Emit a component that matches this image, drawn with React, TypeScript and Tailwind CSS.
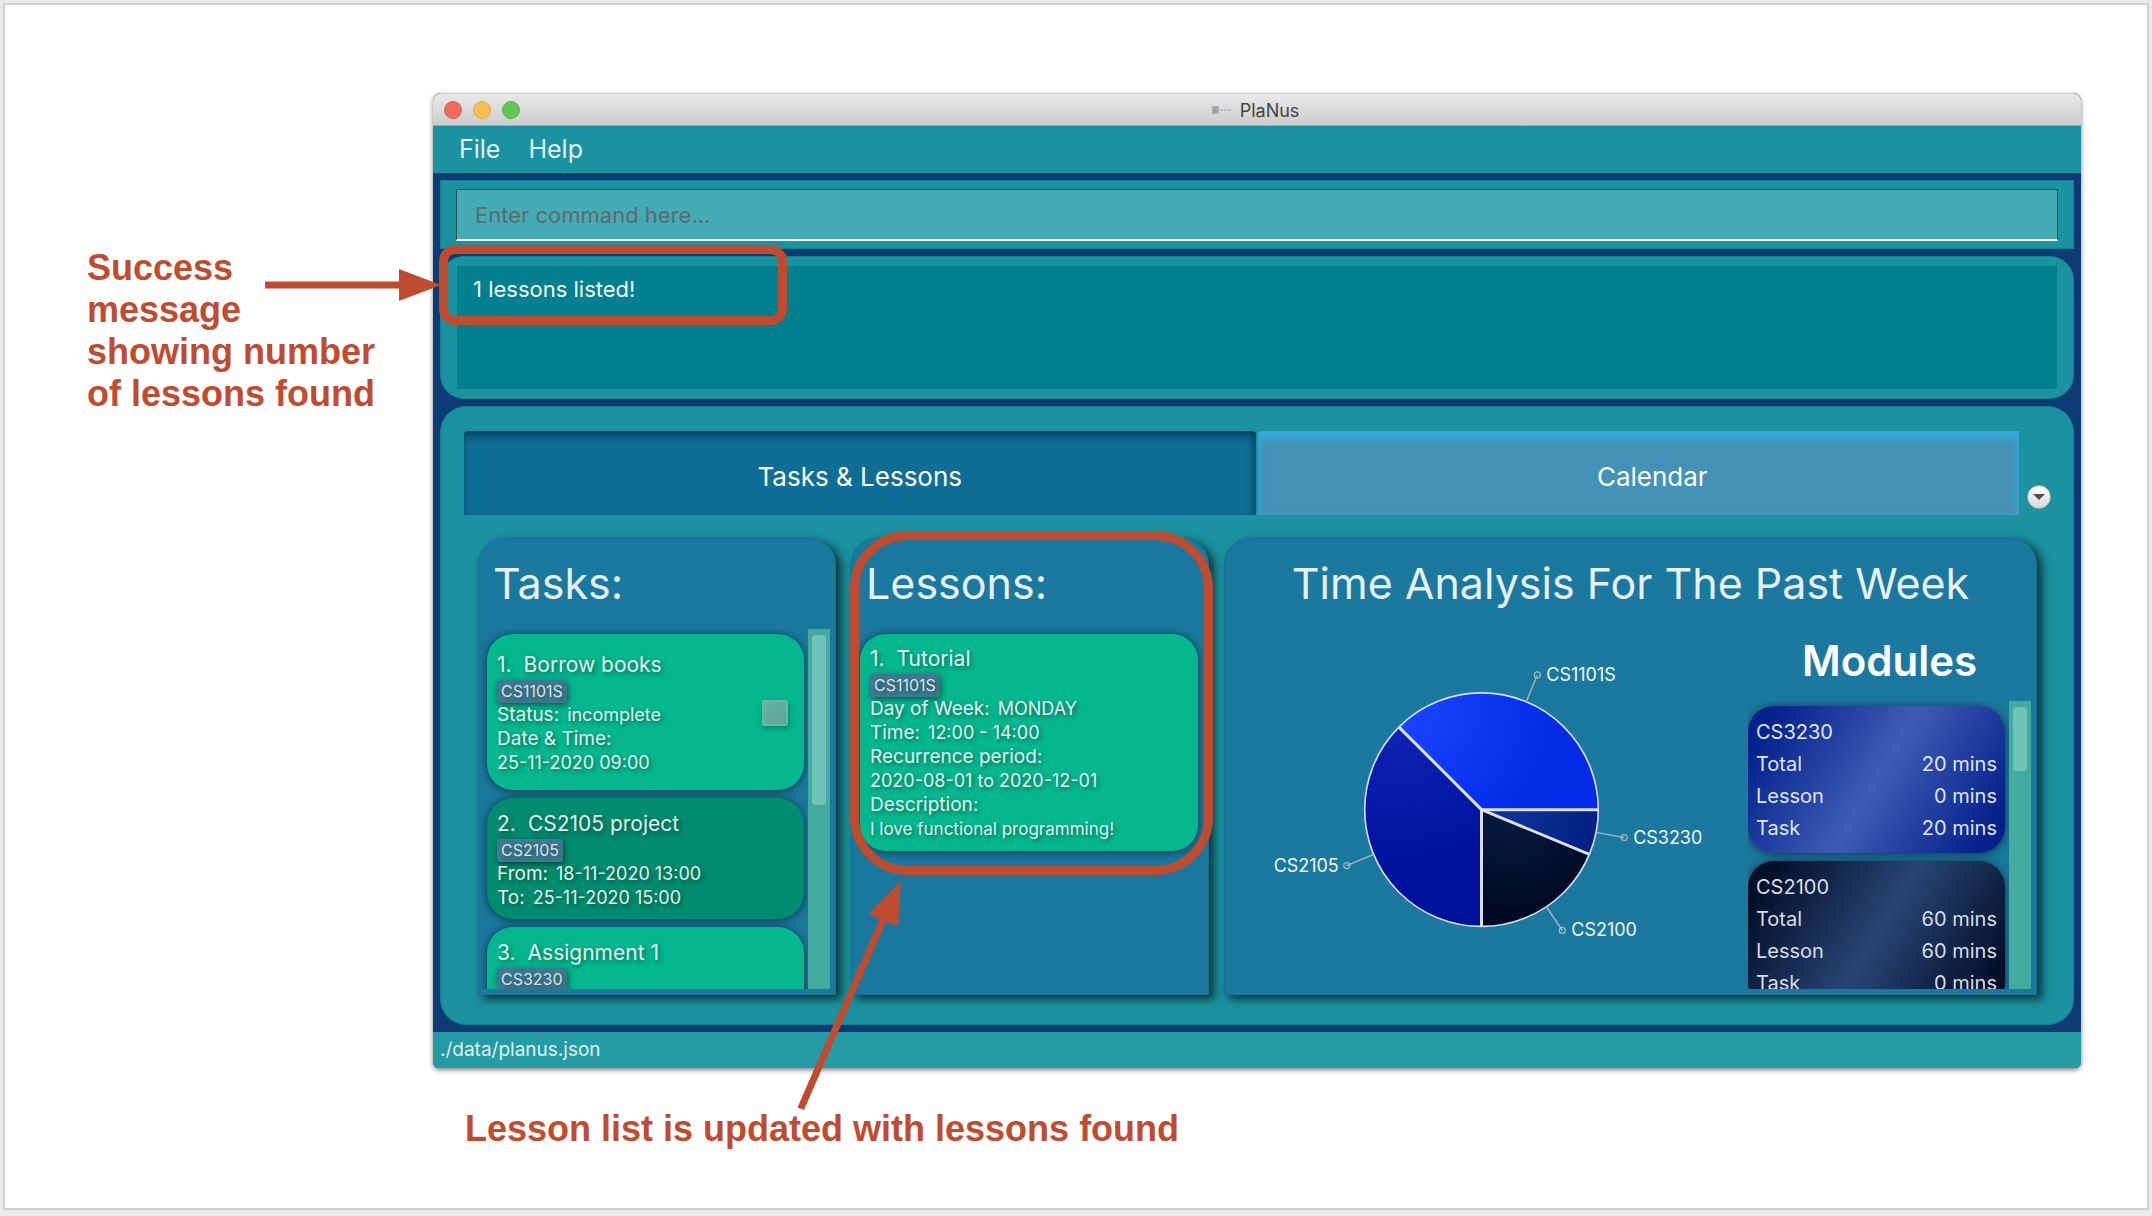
import React from "react";

const TEXT_SHADOW = "[text-shadow:2px_2px_5px_rgba(0,0,0,0.45)]";

function Scrollbar({ thumb }: { thumb: string }) {
  return (
    <div className="w-[22px] shrink-0 bg-[#43ab9d] px-1 py-1.5">
      <div className={`rounded bg-[#6fc4b9] ${thumb}`} />
    </div>
  );
}

function Tag({ children }: { children: React.ReactNode }) {
  return (
    <div className="flex h-6 items-center">
      <span className="rounded-[3px] bg-[#3e7b91] px-1 text-base leading-[23px] text-[#d5e3e8] shadow-[1px_2px_6px_rgba(0,0,0,0.5)]">
        {children}
      </span>
    </div>
  );
}

function Field({ label, value }: { label: string; value?: string }) {
  return (
    <p className="flex items-baseline gap-2 text-[19px] leading-6">
      <span>{label}</span>
      {value && <span className="text-lg leading-6">{value}</span>}
    </p>
  );
}

function Value({ children }: { children: React.ReactNode }) {
  return <p className="text-lg leading-6">{children}</p>;
}

function CardTitle({ index, children }: { index: number; children: React.ReactNode }) {
  return (
    <h3 className="flex gap-3 text-[21px] leading-7">
      <span>{index}.</span>
      <span>{children}</span>
    </h3>
  );
}

function Card({ className, children }: { className: string; children: React.ReactNode }) {
  return (
    <li
      className={`shrink-0 rounded-[26px] px-2.5 text-[#e0f3ed] shadow-[0_1px_9px_rgba(0,0,0,0.55)] ${TEXT_SHADOW} ${className}`}
    >
      {children}
    </li>
  );
}

function Panel({ title, className, children }: { title: string; className?: string; children: React.ReactNode }) {
  return (
    <section
      className={`relative rounded-t-[26px] border border-[#16709a] bg-[#1b789e] shadow-[5px_4px_10px_rgba(0,0,0,0.65)] ${className ?? ""}`}
    >
      <h2 className="px-3.5 pt-3 text-[43px] leading-[64px] text-[#e6f0f5]">{title}</h2>
      {children}
    </section>
  );
}

const slices = [
  { id: "a", from: 0, to: 135, c1: "#1c46ff", c2: "#002ae6" },
  { id: "b", from: 135, to: 270, c1: "#1526b8", c2: "#00129c" },
  { id: "c", from: 270, to: 337.5, c1: "#071c42", c2: "#000a22" },
  { id: "d", from: 337.5, to: 360, c1: "#0f3298", c2: "#001c80" },
];

const CX = 257;
const CY = 181;
const R = 117;

function point(angle: number, r: number) {
  const a = (angle * Math.PI) / 180;
  return [CX + r * Math.cos(a), CY - r * Math.sin(a)];
}

const callouts = [
  { text: "CS1101S", angle: 67.5, x: 313, y: 46, tx: 322, anchor: "start" as const },
  { text: "CS3230", angle: 348.75, x: 400, y: 209, tx: 409, anchor: "start" as const },
  { text: "CS2100", angle: 303.75, x: 338, y: 302, tx: 347, anchor: "start" as const },
  { text: "CS2105", angle: 202.5, x: 122, y: 237, tx: 114, anchor: "end" as const },
];

function PieChart() {
  return (
    <svg viewBox="0 0 516 358" className="w-full" role="img" aria-label="Time spent per module">
      <defs>
        {slices.map((s) => (
          <radialGradient
            key={s.id}
            id={`slice-${s.id}`}
            gradientUnits="userSpaceOnUse"
            cx={s.id < "c" ? CX - 80 : CX + 30}
            cy={s.id < "c" ? CY - 105 : CY}
            r={s.id < "c" ? 160 : 100}
          >
            <stop offset="0" stopColor={s.c1} />
            <stop offset="1" stopColor={s.c2} />
          </radialGradient>
        ))}
      </defs>
      {slices.map((s) => {
        const [x1, y1] = point(s.from, R);
        const [x2, y2] = point(s.to, R);
        return (
          <path
            key={s.id}
            d={`M${CX} ${CY} L${x1} ${y1} A${R} ${R} 0 0 0 ${x2} ${y2} Z`}
            fill={`url(#slice-${s.id})`}
          />
        );
      })}
      <circle cx={CX} cy={CY} r={R} fill="none" stroke="#d5dff0" strokeWidth="1.6" />
      {slices.map((s) => {
        const [x, y] = point(s.from, R);
        return <line key={s.id} x1={CX} y1={CY} x2={x} y2={y} stroke="#dcdff0" strokeWidth="3" />;
      })}
      {callouts.map((c) => {
        const [x, y] = point(c.angle, R);
        return (
          <g key={c.text}>
            <line x1={x} y1={y} x2={c.x} y2={c.y} stroke="#a9b8bf" strokeWidth="1.4" />
            <circle cx={c.x} cy={c.y} r="3" fill="none" stroke="#a9b8bf" strokeWidth="1.2" />
            <text x={c.tx} y={c.y + 6} textAnchor={c.anchor} fontSize="18" fill="#f2f7fa">
              {c.text}
            </text>
          </g>
        );
      })}
    </svg>
  );
}

const modules = [
  {
    code: "CS3230",
    rows: [["Total", "20 mins"], ["Lesson", "0 mins"], ["Task", "20 mins"]],
    tone: "bg-[linear-gradient(121deg,#04218c_8%,#3f5cb4_50%,#04218c_92%)] text-[#dfe5f5]",
  },
  {
    code: "CS2100",
    rows: [["Total", "60 mins"], ["Lesson", "60 mins"], ["Task", "0 mins"]],
    tone: "bg-[linear-gradient(121deg,#020f28_8%,#294575_50%,#020f28_92%)] text-[#d9dde4]",
  },
];

export default function App() {
  return (
    <div className='min-h-screen bg-[#e9e9e9] p-[3px] pb-1.5 font-["Inter","Liberation_Sans",sans-serif]'>
      <div className="min-h-[1207px] border-2 border-[#d0d0d0] bg-white pt-[88px] pr-[66px]">
        <div className="flex">
          <aside className='w-[428px] shrink-0 pt-[154px] pl-[82px] font-["Liberation_Sans",sans-serif] text-4xl leading-[42px] font-bold text-[#bf4b31]'>
            <p>
              Success
              <br />
              message
              <br />
              showing number
              <br />
              of lessons found
            </p>
          </aside>

          <main className="min-w-0 flex-1 rounded-t-lg rounded-b-md bg-[#0d3b73] shadow-[0_2px_5px_rgba(0,0,0,0.5)]">
            <header className="flex h-[33px] items-center rounded-t-lg border-t border-b border-t-[#d0d0d0] border-b-[#a8a8a8] bg-linear-to-b from-[#e8e8e8] to-[#cccccc] pr-3.5 pl-[11px]">
              <div className="flex flex-1 gap-[11px]">
                <span className="size-[18px] rounded-full border border-[#de5d53] bg-[#ef6a5f]" />
                <span className="size-[18px] rounded-full border border-[#e0ad43] bg-[#f6be50]" />
                <span className="size-[18px] rounded-full border border-[#55b548] bg-[#62c655]" />
              </div>
              <div className="flex items-center gap-2">
                <svg width="20" height="8" viewBox="0 0 20 8" aria-hidden="true">
                  <rect width="7" height="8" fill="#b2b0aa" />
                  <path d="M1 2h5M1 5h5M3 1v6" stroke="#98968f" strokeWidth="1" />
                  <path d="M8 4h12" stroke="#b3c2d2" strokeWidth="2" strokeDasharray="3 1" />
                </svg>
                <h1 className="pt-0.5 text-lg leading-7 text-[#444]">PlaNus</h1>
              </div>
              <div className="flex-1" />
            </header>

            <nav className="flex h-[47px] items-center gap-7 bg-[#1a929f] px-[26px] text-[25px] text-[#e0f3f5]">
              <button>File</button>
              <button>Help</button>
            </nav>

            <div className="flex flex-col gap-[7px] px-[7px] py-[7px]">
              <div className="border border-[#12838f] bg-[#1a929f] px-[15px] pt-2 pb-[7px]">
                <input
                  aria-label="Command"
                  placeholder="Enter command here..."
                  className="block h-[52px] w-full border border-b-2 border-[#2f4d52] border-b-white bg-[#42abb6] px-[18px] text-[22px] text-[#444] placeholder:text-[#5f6a6e]"
                />
              </div>

              <div className="relative rounded-[24px] border border-[#12838f] bg-[#1a929f] px-4 py-[9px]">
                <output className="block h-[123px] bg-[#02808f] px-4 pt-[7px] text-[22px] leading-8 text-[#f2fafa]">
                  1 lessons listed!
                </output>
                <div className="absolute -top-3 -left-0.5 h-[80px] w-[348px] rounded-2xl border-[9px] border-[#bf4b31]" />
                <svg className="absolute top-3 right-full" width="178" height="32" viewBox="0 0 178 32" aria-hidden="true">
                  <path d="M2 12.5h134V0l42 16-42 16V19.500H2z" fill="#bf4b31" />
                </svg>
              </div>

              <div className="rounded-[26px] border border-[#12838f] bg-[#1a929f] pt-6 pb-[29px]">
                <div className="flex items-end pl-[23px]">
                  <div className="flex flex-1 gap-0.5 text-[26px] text-white" role="tablist">
                    <button
                      role="tab"
                      aria-selected="true"
                      className="h-[84px] flex-[791] rounded-t-sm bg-[#0f6e96] pt-1.5 shadow-[inset_-2px_5px_9px_rgba(0,40,60,0.65)]"
                    >
                      Tasks &amp; Lessons
                    </button>
                    <button
                      role="tab"
                      aria-selected="false"
                      className="h-[84px] flex-[761] rounded-tl-sm bg-[#4492b5] pt-1.5 shadow-[inset_0_6px_10px_#2fb0e6]"
                    >
                      <span className="pl-7">Calendar</span>
                    </button>
                  </div>
                  <button
                    aria-label="Show tabs"
                    className="mr-[22px] mb-1.5 ml-2 flex size-6 items-center justify-center rounded-full border border-[#a5a5a5] bg-linear-to-b from-white to-[#d8d8d8]"
                  >
                    <svg width="12" height="6" viewBox="0 0 12 6" aria-hidden="true">
                      <path d="M0 0h12L6 6z" fill="#4d4d4d" />
                    </svg>
                  </button>
                </div>

                <div className="mt-[23px] grid grid-cols-[358fr_358fr_813fr] gap-[15px] pr-9 pl-[37px]">
                  <Panel title="Tasks:" className="pb-[5px]">
                    <div className="mt-[14px] flex h-[360px] pr-[5px]">
                      <ul className="flex flex-1 flex-col gap-2 overflow-hidden pt-[5px] pr-1 pl-2">
                        <Card className="flex items-center bg-[#04b78f] pt-[17px] pb-[15px]">
                          <div className="flex-1">
                            <CardTitle index={1}>Borrow books</CardTitle>
                            <Tag>CS1101S</Tag>
                            <Field label="Status:" value="incomplete" />
                            <Field label="Date &amp; Time:" />
                            <Value>25-11-2020 09:00</Value>
                          </div>
                          <input
                            type="checkbox"
                            aria-label="Mark Borrow books as complete"
                            className="mr-1.5 size-[26px] appearance-none rounded-[3px] border-2 border-[#68b9a6] bg-linear-to-br from-[#63b3a1] to-[#60a394] shadow-[1px_2px_5px_rgba(0,0,0,0.3)]"
                          />
                        </Card>
                        <Card className="bg-[#028c6f] pt-3 pb-[9px]">
                          <CardTitle index={2}>CS2105 project</CardTitle>
                          <Tag>CS2105</Tag>
                          <Field label="From:" value="18-11-2020 13:00" />
                          <Field label="To:" value="25-11-2020 15:00" />
                        </Card>
                        <Card className="min-h-[120px] bg-[#04b78f] pt-3 pb-[9px]">
                          <CardTitle index={3}>Assignment 1</CardTitle>
                          <Tag>CS3230</Tag>
                        </Card>
                      </ul>
                      <Scrollbar thumb="h-[170px]" />
                    </div>
                  </Panel>

                  <Panel title="Lessons:">
                    <ul className="mt-[14px] flex flex-col pt-[5px] pr-2.5 pl-2">
                      <Card className="bg-[#04b78f] pt-[11px] pb-[10px]">
                        <CardTitle index={1}>Tutorial</CardTitle>
                        <Tag>CS1101S</Tag>
                        <Field label="Day of Week:" value="MONDAY" />
                        <Field label="Time:" value="12:00 - 14:00" />
                        <Field label="Recurrence period:" />
                        <Value>2020-08-01 to 2020-12-01</Value>
                        <Field label="Description:" />
                        <p className="text-[17px] leading-6">I love functional programming!</p>
                      </Card>
                    </ul>
                    <div className="absolute -top-2 -right-[5px] -left-0.5 h-[344px] rounded-[58px] border-[9px] border-[#bf4b31]" />
                    <svg className="absolute top-[342px] -left-14" width="106" height="230" viewBox="0 0 106 230" aria-hidden="true">
                      <path d="M105 0 73 33l10.500 5L1.500 226.500l6.500 2.500L90 41l12 4z" fill="#bf4b31" />
                    </svg>
                  </Panel>

                  <Panel title="Time Analysis For The Past Week" className="text-center">
                    <div className="flex gap-2 pr-[5px]">
                      <div className="min-w-0 flex-1 pt-[14px]">
                        <PieChart />
                      </div>
                      <div className="w-[283px] text-left">
                        <h3 className="pt-[18px] text-center text-[42px] leading-[56px] font-semibold text-white">
                          Modules
                        </h3>
                        <div className="mt-3 flex h-[288px]">
                          <ul className="flex flex-1 flex-col gap-2 overflow-hidden pt-[5px] pr-1">
                            {modules.map((m) => (
                              <li
                                key={m.code}
                                className={`rounded-[26px] px-2 pt-2.5 pb-[9px] text-xl leading-8 shadow-[0_1px_9px_rgba(0,0,0,0.55)] ${m.tone}`}
                              >
                                <table className="w-full">
                                  <caption className="text-left">{m.code}</caption>
                                  <tbody>
                                    {m.rows.map(([k, v]) => (
                                      <tr key={k}>
                                        <th scope="row" className="text-left font-normal">{k}</th>
                                        <td className="text-right">{v}</td>
                                      </tr>
                                    ))}
                                  </tbody>
                                </table>
                              </li>
                            ))}
                          </ul>
                          <Scrollbar thumb="h-[64px]" />
                        </div>
                      </div>
                    </div>
                  </Panel>
                </div>
              </div>
            </div>

            <footer className="flex h-9 items-center rounded-b-md bg-[#259ba6] px-[7px] text-[19px] text-[#dff2f4]">
              ./data/planus.json
            </footer>
          </main>
        </div>
        <p className='mt-10 ml-[460px] font-["Liberation_Sans",sans-serif] text-4xl leading-[42px] font-bold text-[#bf4b31]'>
          Lesson list is updated with lessons found
        </p>
      </div>
    </div>
  );
}
